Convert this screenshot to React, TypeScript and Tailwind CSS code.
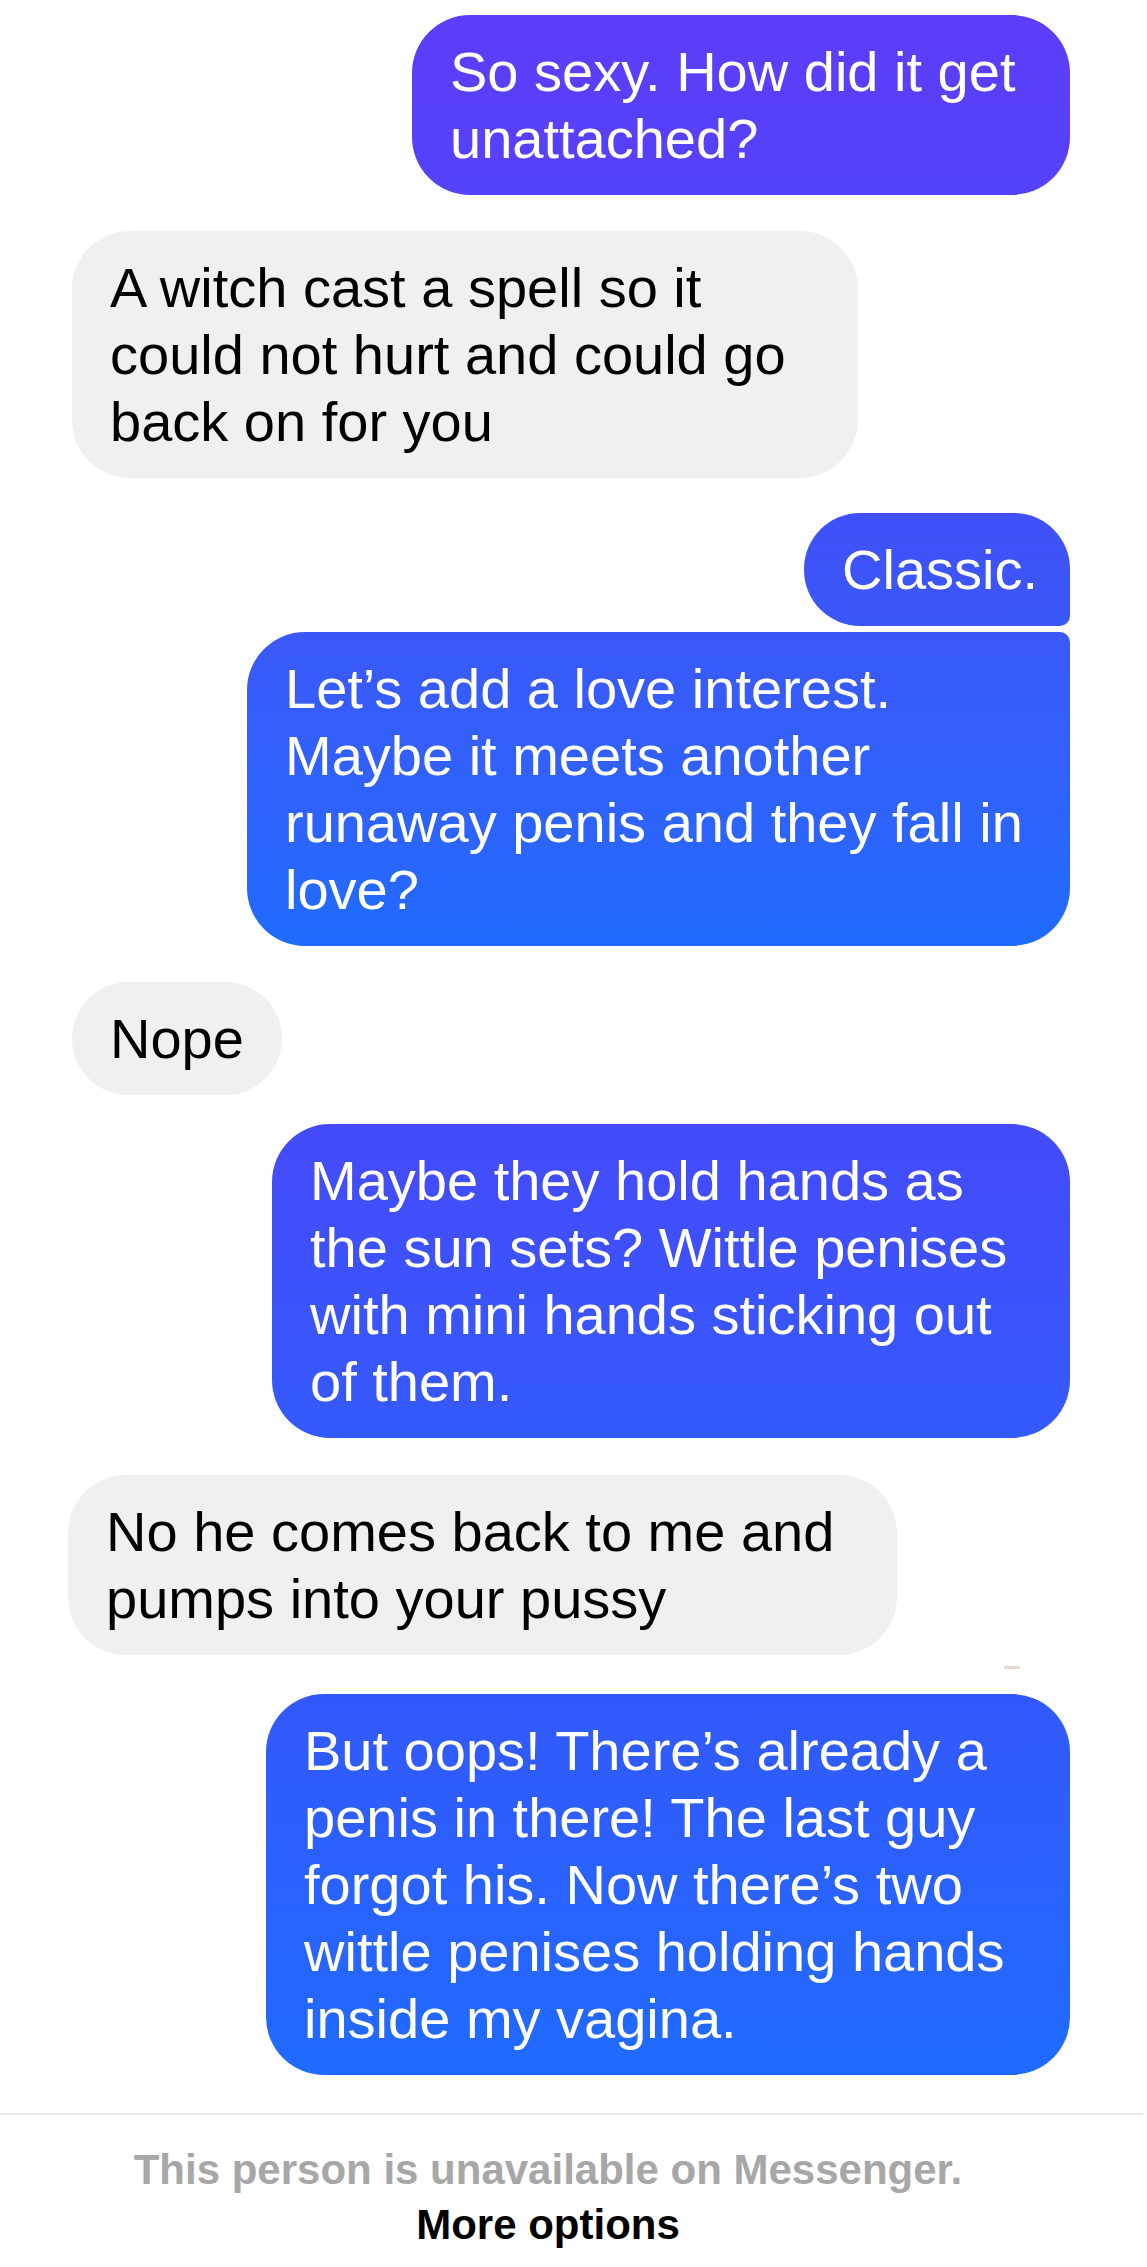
import React from 'react';

type Msg = {
  side: 'in' | 'out';
  lines: string[];
  width: string;
  margin: string;
  tone?: string;
  corners?: string;
};

const messages: Msg[] = [
  {
    side: 'out',
    lines: ['So sexy. How did it get', 'unattached?'],
    width: 'w-[658px]',
    margin: 'mt-[15px]',
    tone: 'bg-linear-to-b from-[#5b3ef9] to-[#5442fb]',
  },
  {
    side: 'in',
    lines: ['A witch cast a spell so it', 'could not hurt and could go', 'back on for you'],
    width: 'w-[786px]',
    margin: 'mt-[36px]',
  },
  {
    side: 'out',
    lines: ['Classic.'],
    width: 'w-[266px]',
    margin: 'mt-[35px]',
    tone: 'bg-linear-to-b from-[#3f50f8] to-[#3a58f9]',
    corners: 'rounded-[56px] rounded-br-[10px]',
  },
  {
    side: 'out',
    lines: ['Let\u2019s add a love interest.', 'Maybe it meets another', 'runaway penis and they fall in', 'love?'],
    width: 'w-[823px]',
    margin: 'mt-[6px]',
    tone: 'bg-linear-to-b from-[#3a58f9] to-[#1f6bff]',
    corners: 'rounded-[58px] rounded-tr-[10px]',
  },
  {
    side: 'in',
    lines: ['Nope'],
    width: 'w-[210px]',
    margin: 'mt-[36px]',
  },
  {
    side: 'out',
    lines: ['Maybe they hold hands as', 'the sun sets? Wittle penises', 'with mini hands sticking out', 'of them.'],
    width: 'w-[798px]',
    margin: 'mt-[29px]',
    tone: 'bg-linear-to-b from-[#444afb] to-[#335afc]',
  },
  {
    side: 'in',
    lines: ['No he comes back to me and', 'pumps into your pussy'],
    width: 'w-[829px] -ml-[4px]',
    margin: 'mt-[37px]',
  },
];

const last: Msg = {
  side: 'out',
  lines: [
    'But oops! There\u2019s already a',
    'penis in there! The last guy',
    'forgot his. Now there\u2019s two',
    'wittle penises holding hands',
    'inside my vagina.',
  ],
  width: 'w-[804px]',
  margin: 'mt-[25px]',
  tone: 'bg-linear-to-b from-[#3258fc] to-[#1f6bff]',
};

function Bubble({ m }: { m: Msg }) {
  const isOut = m.side === 'out';
  return (
    <div className={`flex ${isOut ? 'justify-end' : 'justify-start'} ${m.margin}`}>
      <div
        className={`${m.width} ${m.corners ?? 'rounded-[58px]'} ${
          isOut ? `${m.tone} text-white` : 'bg-[#f0f0f0] text-black'
        } px-[38px] py-[23px] text-[56px] leading-[67px] whitespace-nowrap`}
      >
        {m.lines.map((l, i) => (
          <div key={i}>{l}</div>
        ))}
      </div>
    </div>
  );
}

export default function App() {
  return (
    <div className="w-[1147px] h-[2267px] bg-white overflow-hidden font-['Liberation_Sans',Arial,sans-serif]">
      <div className="pl-[72px] pr-[77px]">
        {messages.map((m, i) => (
          <Bubble key={i} m={m} />
        ))}

        {/* seen marker */}
        <div className="flex justify-end pr-[50px] mt-[11px]">
          <div className="w-[16px] h-[3px] rounded-full bg-[#ecd3cb]" />
        </div>

        <Bubble m={last} />
      </div>

      <div className="mt-[38px] mr-[4px] h-[2px] bg-[#ececec]" />

      <div className="flex flex-col items-center pr-[51px] pt-[27px]">
        <div className="text-[42px] leading-[55px] font-bold text-[#a7a7a7]">
          This person is unavailable on Messenger.
        </div>
        <div className="text-[42px] leading-[55px] font-bold text-black">More options</div>
      </div>
    </div>
  );
}
